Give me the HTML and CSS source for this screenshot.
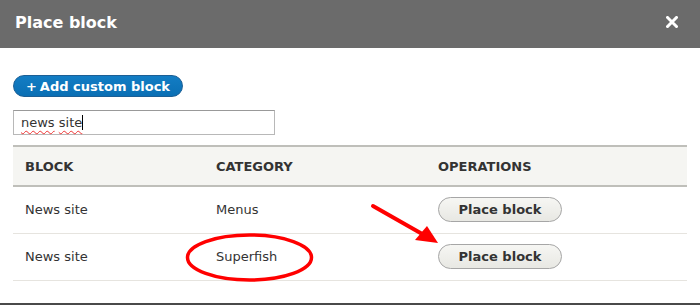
FILE: index.html
```html
<!DOCTYPE html>
<html>
<head>
<meta charset="utf-8">
<link rel="stylesheet" href="styles.css">
</head>
<body>
<div class="dialog">
  <div class="titlebar">
    <span class="title">Place block</span>
    <svg class="close" width="12" height="12" viewBox="0 0 12 12"><path d="M1.5 1.5 L10.5 10.5 M10.5 1.5 L1.5 10.5" stroke="#fff" stroke-width="3" stroke-linecap="square"/></svg>
  </div>
  <div class="content">
    <a class="btn-primary"><span class="plus">+</span>Add custom block</a>
    <div class="search"><span class="value"><span class="typed">news</span> <span class="typed">site</span></span><span class="caret"></span></div>
    <table class="blocks">
      <colgroup><col class="c1"><col class="c2"><col class="c3"></colgroup>
      <thead>
        <tr><th>BLOCK</th><th>CATEGORY</th><th>OPERATIONS</th></tr>
      </thead>
      <tbody>
        <tr><td>News site</td><td>Menus</td><td><a class="btn">Place block</a></td></tr>
        <tr><td>News site</td><td>Superfish</td><td><a class="btn">Place block</a></td></tr>
      </tbody>
    </table>
  </div>
  <div class="bottomline"></div>
  <svg class="annot" width="700" height="305" viewBox="0 0 700 305">
    <ellipse cx="249.5" cy="257.5" rx="62" ry="22.5" fill="none" stroke="#f00" stroke-width="3.5"/>
    <line x1="373" y1="206" x2="424" y2="235" stroke="#f00" stroke-width="4" stroke-linecap="round"/>
    <polygon points="438,243 415,240 427,226" fill="#f00"/>
  </svg>
</div>
</body>
</html>
```
FILE: styles.css
```css
html, body {
  margin: 0;
  padding: 0;
  background: #fff;
}
body {
  font-family: "DejaVu Sans", sans-serif;
  font-size: 13px;
  color: #333;
}
.dialog {
  position: relative;
  width: 700px;
  height: 305px;
  display: flex;
  flex-direction: column;
  overflow: hidden;
}
.titlebar {
  height: 48px;
  flex: none;
  background: #6b6b6b;
  display: flex;
  align-items: center;
  justify-content: space-between;
  padding: 0 22px 0 15px;
  box-sizing: border-box;
}
.title {
  color: #fff;
  font-weight: bold;
  font-size: 16px;
  position: relative;
  top: -2px;
}
.close {
  display: block;
  position: relative;
  top: -2px;
}
.content {
  flex: 1;
  padding: 27px 13px 0 13px;
  display: flex;
  flex-direction: column;
  align-items: flex-start;
}
.btn-primary {
  display: flex;
  align-items: center;
  justify-content: center;
  box-sizing: border-box;
  width: 170px;
  height: 22px;
  border-radius: 11px;
  background: linear-gradient(#137dc4, #0a6fb4);
  border: 1px solid #1c5f95;
  color: #fff;
  font-weight: bold;
  font-size: 13px;
}
.plus {
  margin-right: 3px;
}
.search {
  margin-top: 13px;
  box-sizing: border-box;
  width: 262px;
  height: 25px;
  border: 1px solid #b8b8b8;
  border-top-color: #999;
  padding: 0 0 0 7px;
  display: flex;
  align-items: center;
  font-size: 13px;
  color: #333;
}
.value {
  white-space: pre;
}
.typed {
  text-decoration: underline wavy #e33;
  text-decoration-thickness: 1px;
  text-underline-offset: 3px;
}
.caret {
  display: inline-block;
  width: 1px;
  height: 15px;
  background: #000;
}
.blocks {
  margin-top: 10px;
  width: 674px;
  border-collapse: collapse;
  table-layout: fixed;
}
.c1 { width: 191px; }
.c2 { width: 222px; }
.c3 { width: 261px; }
.blocks th {
  background: #f5f5f2;
  border-top: 2px solid #bfbfba;
  border-bottom: 2px solid #bfbfba;
  height: 38px;
  padding: 0 12px;
  text-align: left;
  font-weight: bold;
  font-size: 13px;
  color: #333;
}
.blocks td {
  height: 47px;
  padding: 0 12px;
  border-bottom: 1px solid #e6e4df;
  color: #333;
  box-sizing: border-box;
}
.btn {
  display: flex;
  align-items: center;
  justify-content: center;
  box-sizing: border-box;
  width: 124px;
  height: 25px;
  border-radius: 13px;
  border: 1px solid #a6a6a6;
  background: linear-gradient(#f6f6f3, #e8e8e3);
  font-weight: bold;
  color: #333;
  font-size: 13px;
}
.bottomline {
  flex: none;
  height: 2px;
  background: #4a4a4a;
}
.annot {
  position: absolute;
  left: 0;
  top: 0;
  pointer-events: none;
}
```
